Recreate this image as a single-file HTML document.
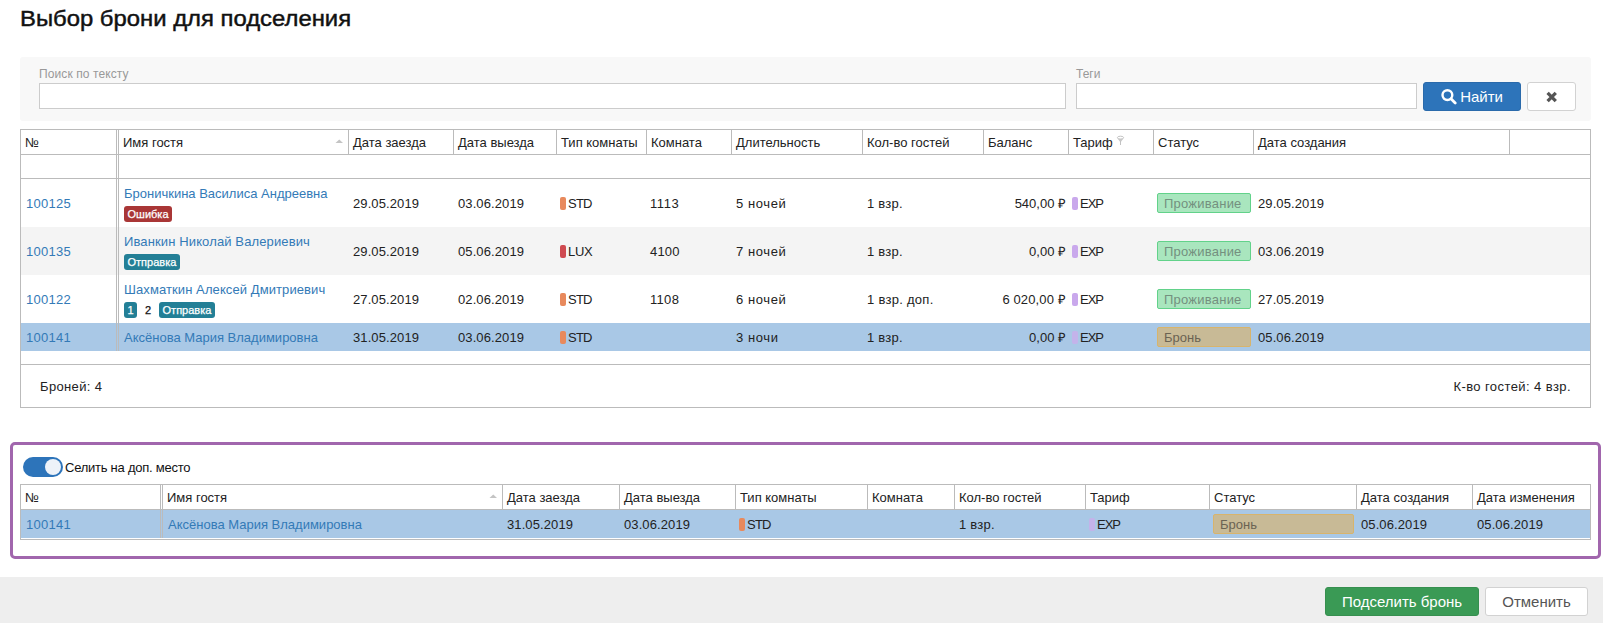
<!DOCTYPE html>
<html lang="ru">
<head>
<meta charset="utf-8">
<title>Выбор брони для подселения</title>
<style>
*{box-sizing:border-box;margin:0;padding:0}
html,body{width:1603px;height:623px;overflow:hidden;background:#fff}
body{font-family:"Liberation Sans",sans-serif;font-size:13px;color:#222;position:relative}
.abs{position:absolute}
h1{position:absolute;left:20px;top:5px;font-size:22px;font-weight:400;color:#111;white-space:nowrap;line-height:28px;transform-origin:0 50%;transform:scaleX(1.084);-webkit-text-stroke:.45px #111}
.search{position:absolute;left:20px;top:57px;width:1571px;height:64px;background:#f8f8f8;border-radius:3px}
.lbl{position:absolute;font-size:12px;color:#999;line-height:14px;white-space:nowrap}
.inp{position:absolute;height:26px;border:1px solid #ccc;background:#fff}
.btn{position:absolute;height:29px;border-radius:3px;font-size:15px;line-height:27px;text-align:center;white-space:nowrap}
.cell{position:absolute;white-space:nowrap;line-height:16px;font-size:13px;color:#222}
.hd{color:#222}
.vl{position:absolute;width:1px;background:#bbb}
.hl{position:absolute;height:1px;background:#bbb}
a{color:#337ab7;text-decoration:none}
.tag{display:inline-block;font-size:11px;line-height:16px;height:15.5px;padding:0 3.5px;-webkit-text-stroke:.25px currentColor;border-radius:3px;color:#fff;vertical-align:top}
.st{position:absolute;height:20px;border:1px solid;font-size:13px;line-height:20px;padding-left:6px;border-radius:2px;white-space:nowrap}
.dot{display:inline-block;width:6px;height:13px;border-radius:2px;vertical-align:-2px;margin-right:2px}
</style>
</head>
<body>
<h1>Выбор брони для подселения</h1>

<div class="search">
  <div class="lbl" style="left:19px;top:10px;letter-spacing:.1px">Поиск по тексту</div>
  <div class="inp" style="left:19px;top:26px;width:1027px"></div>
  <div class="lbl" style="left:1056px;top:10px">Теги</div>
  <div class="inp" style="left:1056px;top:26px;width:341px"></div>
  <div class="btn" style="left:1403px;top:25px;width:98px;background:#2d74ba;color:#fff;border:1px solid #2a6aab">
    <svg width="16" height="16" viewBox="0 0 16 16" style="vertical-align:-2px;margin-left:-1px;position:relative;left:1px;top:1px"><circle cx="6.4" cy="6.1" r="4.9" fill="none" stroke="#fff" stroke-width="2.4"/><path d="M10 9.8 L14.2 14" stroke="#fff" stroke-width="2.8" stroke-linecap="round"/></svg>
    Найти</div>
  <div class="btn" style="left:1507px;top:25px;width:49px;background:#fff;color:#444;border:1px solid #d2d2d2">
    <svg width="12" height="12" viewBox="0 0 12 12" style="vertical-align:-1px"><path d="M1.6 1.9 L9.8 10.1 M9.8 1.9 L1.6 10.1" stroke="#555" stroke-width="3.3" stroke-linecap="butt"/></svg>
  </div>
</div>

<!-- GRID 1 -->
<div class="abs" style="left:21px;top:227px;width:1569px;height:48px;background:#f4f4f4"></div>
<div class="abs" style="left:21px;top:323px;width:1569px;height:28px;background:#a9c8e6"></div>
<div class="hl" style="left:20px;top:129px;width:1571px;background:#bbb"></div>
<div class="hl" style="left:20px;top:154px;width:1571px;background:#bbb"></div>
<div class="hl" style="left:20px;top:178px;width:1571px;background:#bbb"></div>
<div class="hl" style="left:20px;top:364px;width:1571px;background:#bbb"></div>
<div class="hl" style="left:20px;top:407px;width:1571px;background:#bbb"></div>
<div class="vl" style="left:20px;top:129px;height:279px;background:#bbb"></div>
<div class="vl" style="left:1590px;top:129px;height:279px;background:#bbb"></div>
<div class="vl" style="left:116px;top:129px;height:222px;background:#bbb"></div>
<div class="vl" style="left:118px;top:129px;height:222px;background:#bbb"></div>
<div class="vl" style="left:348px;top:129px;height:26px;background:#bbb"></div>
<div class="vl" style="left:453px;top:129px;height:26px;background:#bbb"></div>
<div class="vl" style="left:556px;top:129px;height:26px;background:#bbb"></div>
<div class="vl" style="left:646px;top:129px;height:26px;background:#bbb"></div>
<div class="vl" style="left:731px;top:129px;height:26px;background:#bbb"></div>
<div class="vl" style="left:862px;top:129px;height:26px;background:#bbb"></div>
<div class="vl" style="left:983px;top:129px;height:26px;background:#bbb"></div>
<div class="vl" style="left:1068px;top:129px;height:26px;background:#bbb"></div>
<div class="vl" style="left:1153px;top:129px;height:26px;background:#bbb"></div>
<div class="vl" style="left:1253px;top:129px;height:26px;background:#bbb"></div>
<div class="vl" style="left:1509px;top:129px;height:26px;background:#bbb"></div>
<div class="cell hd" style="left:25px;top:135px;">№</div>
<div class="cell hd" style="left:123px;top:135px;">Имя гостя</div>
<div class="cell hd" style="left:353px;top:135px;">Дата заезда</div>
<div class="cell hd" style="left:458px;top:135px;">Дата выезда</div>
<div class="cell hd" style="left:561px;top:135px;">Тип комнаты</div>
<div class="cell hd" style="left:651px;top:135px;">Комната</div>
<div class="cell hd" style="left:736px;top:135px;">Длительность</div>
<div class="cell hd" style="left:867px;top:135px;">Кол-во гостей</div>
<div class="cell hd" style="left:988px;top:135px;">Баланс</div>
<div class="cell hd" style="left:1073px;top:135px;">Тариф</div>
<div class="cell hd" style="left:1158px;top:135px;">Статус</div>
<div class="cell hd" style="left:1258px;top:135px;">Дата создания</div>
<svg class="abs" style="left:335px;top:139px" width="9" height="5" viewBox="0 0 9 5"><path d="M0.5 4 L4.25 0.5 L8 4 Z" fill="#c4c4c4"/></svg>
<svg class="abs" style="left:1116px;top:135px" width="9" height="11" viewBox="0 0 9 11"><ellipse cx="4.5" cy="2.7" rx="3.1" ry="1.5" fill="none" stroke="#c2c2c2" stroke-width="1"/><path d="M1.8 3.8 L7.2 3.8 L4.5 7.4 Z" fill="#c8c8c8"/><path d="M4.5 6 V10" stroke="#c2c2c2" stroke-width="1"/></svg>
<div class="cell" style="left:26px;top:196px;"><a><span style="letter-spacing:0.25px">100125</span></a></div>
<div class="cell" style="left:124px;top:186px;"><a>Броничкина Василиса Андреевна</a></div>
<div class="cell" style="left:124px;top:206px;line-height:15px;font-size:0"><span class="tag" style="background:#a93636">Ошибка</span></div>
<div class="cell" style="left:353px;top:196px;"><span style="letter-spacing:.1px">29.05.2019</span></div>
<div class="cell" style="left:458px;top:196px;"><span style="letter-spacing:.1px">03.06.2019</span></div>
<div class="cell" style="left:560px;top:196px;"><span class="dot" style="background:#e8895c"></span><span style="letter-spacing:-0.75px">STD</span></div>
<div class="cell" style="left:650px;top:196px;"><span style="letter-spacing:0.55px">1113</span></div>
<div class="cell" style="left:736px;top:196px;"><span style="letter-spacing:0.58px">5 ночей</span></div>
<div class="cell" style="left:867px;top:196px;"><span style="letter-spacing:0.25px">1 взр.</span></div>
<div class="cell" style="right:537px;top:196px">540,00 ₽</div>
<div class="cell" style="left:1072px;top:196px;"><span class="dot" style="background:#c9a8ec"></span><span style="letter-spacing:-1.0px">EXP</span></div>
<div class="st" style="left:1157px;top:193px;width:94px;background:#a9e6be;border-color:#62d28a;color:#74907f"><span style="letter-spacing:0.23px">Проживание</span></div>
<div class="cell" style="left:1258px;top:196px;"><span style="letter-spacing:.1px">29.05.2019</span></div>
<div class="cell" style="left:26px;top:244px;"><a><span style="letter-spacing:0.25px">100135</span></a></div>
<div class="cell" style="left:124px;top:234px;"><a><span style="letter-spacing:0.125px">Иванкин Николай Валериевич</span></a></div>
<div class="cell" style="left:124px;top:254px;line-height:15px;font-size:0"><span class="tag" style="background:#237f96">Отправка</span></div>
<div class="cell" style="left:353px;top:244px;"><span style="letter-spacing:.1px">29.05.2019</span></div>
<div class="cell" style="left:458px;top:244px;"><span style="letter-spacing:.1px">05.06.2019</span></div>
<div class="cell" style="left:560px;top:244px;"><span class="dot" style="background:#cf4a50"></span><span style="letter-spacing:-0.25px">LUX</span></div>
<div class="cell" style="left:650px;top:244px;"><span style="letter-spacing:0.2px">4100</span></div>
<div class="cell" style="left:736px;top:244px;"><span style="letter-spacing:0.58px">7 ночей</span></div>
<div class="cell" style="left:867px;top:244px;"><span style="letter-spacing:0.25px">1 взр.</span></div>
<div class="cell" style="right:537px;top:244px">0,00 ₽</div>
<div class="cell" style="left:1072px;top:244px;"><span class="dot" style="background:#c9a8ec"></span><span style="letter-spacing:-1.0px">EXP</span></div>
<div class="st" style="left:1157px;top:241px;width:94px;background:#a9e6be;border-color:#62d28a;color:#74907f"><span style="letter-spacing:0.23px">Проживание</span></div>
<div class="cell" style="left:1258px;top:244px;"><span style="letter-spacing:.1px">03.06.2019</span></div>
<div class="cell" style="left:26px;top:292px;"><a><span style="letter-spacing:0.25px">100122</span></a></div>
<div class="cell" style="left:124px;top:282px;"><a><span style="letter-spacing:0.09px">Шахматкин Алексей Дмитриевич</span></a></div>
<div class="cell" style="left:124px;top:302px;line-height:15px;font-size:0"><span class="tag" style="background:#237f96;padding:0 3.4px">1</span><span class="tag" style="background:none;color:#111;padding:0 8px">2</span><span class="tag" style="background:#237f96">Отправка</span></div>
<div class="cell" style="left:353px;top:292px;"><span style="letter-spacing:.1px">27.05.2019</span></div>
<div class="cell" style="left:458px;top:292px;"><span style="letter-spacing:.1px">02.06.2019</span></div>
<div class="cell" style="left:560px;top:292px;"><span class="dot" style="background:#e8895c"></span><span style="letter-spacing:-0.75px">STD</span></div>
<div class="cell" style="left:650px;top:292px;"><span style="letter-spacing:0.3px">1108</span></div>
<div class="cell" style="left:736px;top:292px;"><span style="letter-spacing:0.58px">6 ночей</span></div>
<div class="cell" style="left:867px;top:292px;"><span style="letter-spacing:0.28px">1 взр. доп.</span></div>
<div class="cell" style="right:537px;top:292px"><span style="letter-spacing:0.14px">6 020,00 ₽</span></div>
<div class="cell" style="left:1072px;top:292px;"><span class="dot" style="background:#c9a8ec"></span><span style="letter-spacing:-1.0px">EXP</span></div>
<div class="st" style="left:1157px;top:289px;width:94px;background:#a9e6be;border-color:#62d28a;color:#74907f"><span style="letter-spacing:0.23px">Проживание</span></div>
<div class="cell" style="left:1258px;top:292px;"><span style="letter-spacing:.1px">27.05.2019</span></div>
<div class="cell" style="left:26px;top:330px;"><a><span style="letter-spacing:0.25px">100141</span></a></div>
<div class="cell" style="left:124px;top:330px;"><a>Аксёнова Мария Владимировна</a></div>
<div class="cell" style="left:353px;top:330px;"><span style="letter-spacing:.1px">31.05.2019</span></div>
<div class="cell" style="left:458px;top:330px;"><span style="letter-spacing:.1px">03.06.2019</span></div>
<div class="cell" style="left:560px;top:330px;"><span class="dot" style="background:#e8895c"></span><span style="letter-spacing:-0.75px">STD</span></div>
<div class="cell" style="left:736px;top:330px;"><span style="letter-spacing:0.6px">3 ночи</span></div>
<div class="cell" style="left:867px;top:330px;"><span style="letter-spacing:0.25px">1 взр.</span></div>
<div class="cell" style="right:537px;top:330px">0,00 ₽</div>
<div class="cell" style="left:1072px;top:330px;"><span class="dot" style="background:#c3b3ea"></span><span style="letter-spacing:-1.0px">EXP</span></div>
<div class="st" style="left:1157px;top:327px;width:94px;background:#c8ba96;border-color:#d8b46c;color:#6b6353">Бронь</div>
<div class="cell" style="left:1258px;top:330px;"><span style="letter-spacing:.1px">05.06.2019</span></div>
<div class="cell" style="left:40px;top:379px;"><span style="letter-spacing:0.35px">Броней: 4</span></div>
<div class="cell" style="right:32px;top:379px"><span style="letter-spacing:0.42px">К-во гостей: 4 взр.</span></div>

<!-- purple box -->
<div class="abs" style="left:10px;top:442px;width:1591px;height:117px;border:3px solid #a166ad;border-radius:5px"></div>
<div class="abs" style="left:23px;top:457px;width:40px;height:20px;border-radius:10px;background:#2d74ba">
  <div class="abs" style="right:2px;top:2px;width:16px;height:16px;border-radius:50%;background:#edf2f9"></div>
</div>
<div class="cell" style="left:65px;top:460px;color:#111;letter-spacing:-0.25px">Селить на доп. место</div>

<!-- GRID 2 -->
<div class="abs" style="left:21px;top:510px;width:1569px;height:28px;background:#a9c8e6"></div>
<div class="hl" style="left:20px;top:484px;width:1571px;background:#bbb"></div>
<div class="hl" style="left:20px;top:509px;width:1571px;background:#bbb"></div>
<div class="hl" style="left:20px;top:539px;width:1571px;background:#bbb"></div>
<div class="vl" style="left:20px;top:484px;height:56px;background:#bbb"></div>
<div class="vl" style="left:1590px;top:484px;height:56px;background:#bbb"></div>
<div class="vl" style="left:160px;top:484px;height:54px;background:#bbb"></div>
<div class="vl" style="left:162px;top:484px;height:54px;background:#bbb"></div>
<div class="vl" style="left:502px;top:484px;height:26px;background:#bbb"></div>
<div class="vl" style="left:619px;top:484px;height:26px;background:#bbb"></div>
<div class="vl" style="left:735px;top:484px;height:26px;background:#bbb"></div>
<div class="vl" style="left:867px;top:484px;height:26px;background:#bbb"></div>
<div class="vl" style="left:954px;top:484px;height:26px;background:#bbb"></div>
<div class="vl" style="left:1085px;top:484px;height:26px;background:#bbb"></div>
<div class="vl" style="left:1209px;top:484px;height:26px;background:#bbb"></div>
<div class="vl" style="left:1356px;top:484px;height:26px;background:#bbb"></div>
<div class="vl" style="left:1472px;top:484px;height:26px;background:#bbb"></div>
<div class="cell hd" style="left:25px;top:490px;">№</div>
<div class="cell hd" style="left:167px;top:490px;">Имя гостя</div>
<div class="cell hd" style="left:507px;top:490px;">Дата заезда</div>
<div class="cell hd" style="left:624px;top:490px;">Дата выезда</div>
<div class="cell hd" style="left:740px;top:490px;">Тип комнаты</div>
<div class="cell hd" style="left:872px;top:490px;">Комната</div>
<div class="cell hd" style="left:959px;top:490px;">Кол-во гостей</div>
<div class="cell hd" style="left:1090px;top:490px;">Тариф</div>
<div class="cell hd" style="left:1214px;top:490px;">Статус</div>
<div class="cell hd" style="left:1361px;top:490px;">Дата создания</div>
<div class="cell hd" style="left:1477px;top:490px;">Дата изменения</div>
<svg class="abs" style="left:489px;top:494px" width="9" height="5" viewBox="0 0 9 5"><path d="M0.5 4 L4.25 0.5 L8 4 Z" fill="#c4c4c4"/></svg>
<div class="cell" style="left:26px;top:517px;"><a><span style="letter-spacing:0.25px">100141</span></a></div>
<div class="cell" style="left:168px;top:517px;"><a>Аксёнова Мария Владимировна</a></div>
<div class="cell" style="left:507px;top:517px;"><span style="letter-spacing:.1px">31.05.2019</span></div>
<div class="cell" style="left:624px;top:517px;"><span style="letter-spacing:.1px">03.06.2019</span></div>
<div class="cell" style="left:739px;top:517px;"><span class="dot" style="background:#e8895c"></span><span style="letter-spacing:-0.75px">STD</span></div>
<div class="cell" style="left:959px;top:517px;"><span style="letter-spacing:0.25px">1 взр.</span></div>
<div class="cell" style="left:1089px;top:517px;"><span class="dot" style="background:#c3b3ea"></span><span style="letter-spacing:-1.0px">EXP</span></div>
<div class="st" style="left:1213px;top:514px;width:141px;background:#c8ba96;border-color:#d8b46c;color:#6b6353">Бронь</div>
<div class="cell" style="left:1361px;top:517px;"><span style="letter-spacing:.1px">05.06.2019</span></div>
<div class="cell" style="left:1477px;top:517px;"><span style="letter-spacing:.1px">05.06.2019</span></div>

<!-- footer -->
<div class="abs" style="left:0;top:577px;width:1603px;height:46px;background:#eee"></div>
<div class="btn" style="left:1325px;top:587px;width:154px;background:#3a9a55;color:#fff;border:1px solid #368f4f">Подселить бронь</div>
<div class="btn" style="left:1485px;top:587px;width:103px;background:#fff;color:#555;border:1px solid #d2d2d2">Отменить</div>
</body>
</html>
